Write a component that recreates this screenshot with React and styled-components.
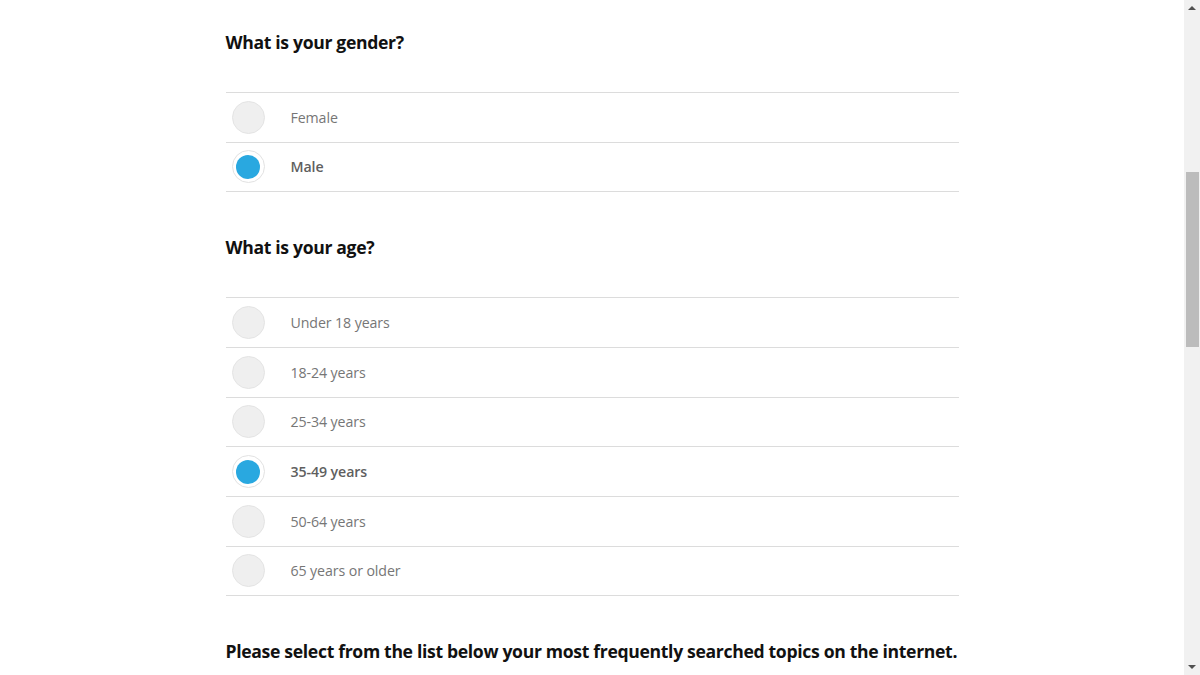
import React, { useState } from "react";
import styled, { createGlobalStyle } from "styled-components";

const Global = createGlobalStyle`
  html, body { margin: 0; padding: 0; background: #fff; overflow: hidden; }
  body { font-family: "Open Sans", "Noto Sans", sans-serif; }
`;

const Page = styled.div`
  display: flex;
  width: 1200px;
  height: 675px;
  overflow: hidden;
`;

const Main = styled.main`
  flex: 1;
  overflow: hidden;
  padding-top: 29px;
  display: flex;
  justify-content: center;
`;

const Form = styled.div`
  width: 733px;
  display: flex;
  flex-direction: column;
  gap: 42px;
`;

const Section = styled.section`
  display: flex;
  flex-direction: column;
`;

const Question = styled.h2`
  margin: 0 0 37px;
  font-size: 17.6px;
  line-height: 26px;
  font-weight: 700;
  color: #111;
  letter-spacing: -0.33px;
  white-space: nowrap;
`;

const List = styled.div`
  border-top: 1px solid #dcdcdc;
`;

const Row = styled.label`
  display: flex;
  align-items: center;
  height: 49.67px;
  box-sizing: border-box;
  border-bottom: 1px solid #dcdcdc;
  cursor: pointer;
  padding-left: 6px;
`;

const Radio = styled.span`
  width: 33px;
  height: 33px;
  box-sizing: border-box;
  border-radius: 50%;
  flex-shrink: 0;
  display: flex;
  align-items: center;
  justify-content: center;
  background: ${(p) => (p.$checked ? "#fff" : "#efefef")};
  border: 1px solid ${(p) => (p.$checked ? "#e2e2e2" : "#e4e4e4")};
  &::after {
    content: "";
    width: 24px;
    height: 24px;
    border-radius: 50%;
    background: #29a8e0;
    display: ${(p) => (p.$checked ? "block" : "none")};
  }
`;

const Label = styled.span`
  margin-left: 26px;
  font-size: 14.2px;
  color: ${(p) => (p.$checked ? "#5f5f5f" : "#767676")};
  font-weight: ${(p) => (p.$checked ? 600 : 400)};
  letter-spacing: -0.1px;
`;

const Scrollbar = styled.div`
  width: 16px;
  background: #f1f1f1;
  display: flex;
  flex-direction: column;
  align-items: center;
`;

const Arrow = styled.div`
  width: 0;
  height: 0;
  border-left: 4px solid transparent;
  border-right: 4px solid transparent;
  ${(p) =>
    p.$up
      ? "border-bottom: 4px solid #505050; margin-top: 6px;"
      : "border-top: 4px solid #505050; margin-bottom: 6px;"}
`;

const Track = styled.div`
  flex: 1;
  width: 100%;
  display: flex;
  flex-direction: column;
  align-items: center;
  padding-top: 162px;
`;

const Thumb = styled.div`
  width: 13px;
  height: 175px;
  background: #bcbcbc;
  margin-left: 1px;
`;

const questions = [
  {
    q: "What is your gender?",
    options: ["Female", "Male"],
    selected: 1,
  },
  {
    q: "What is your age?",
    options: [
      "Under 18 years",
      "18-24 years",
      "25-34 years",
      "35-49 years",
      "50-64 years",
      "65 years or older",
    ],
    selected: 3,
  },
];

function RadioQuestion({ data }) {
  const [sel, setSel] = useState(data.selected);
  return (
    <Section>
      <Question>{data.q}</Question>
      <List>
        {data.options.map((o, i) => (
          <Row key={o} onClick={() => setSel(i)}>
            <Radio $checked={sel === i} />
            <Label $checked={sel === i}>{o}</Label>
          </Row>
        ))}
      </List>
    </Section>
  );
}

export default function App() {
  return (
    <>
      <Global />
      <Page>
        <Main>
          <Form>
            {questions.map((d, i) => (
              <RadioQuestion key={i} data={d} />
            ))}
            <Section>
              <Question>
                Please select from the list below your most frequently searched topics on the internet.
              </Question>
            </Section>
          </Form>
        </Main>
        <Scrollbar>
          <Arrow $up />
          <Track>
            <Thumb />
          </Track>
          <Arrow />
        </Scrollbar>
      </Page>
    </>
  );
}
